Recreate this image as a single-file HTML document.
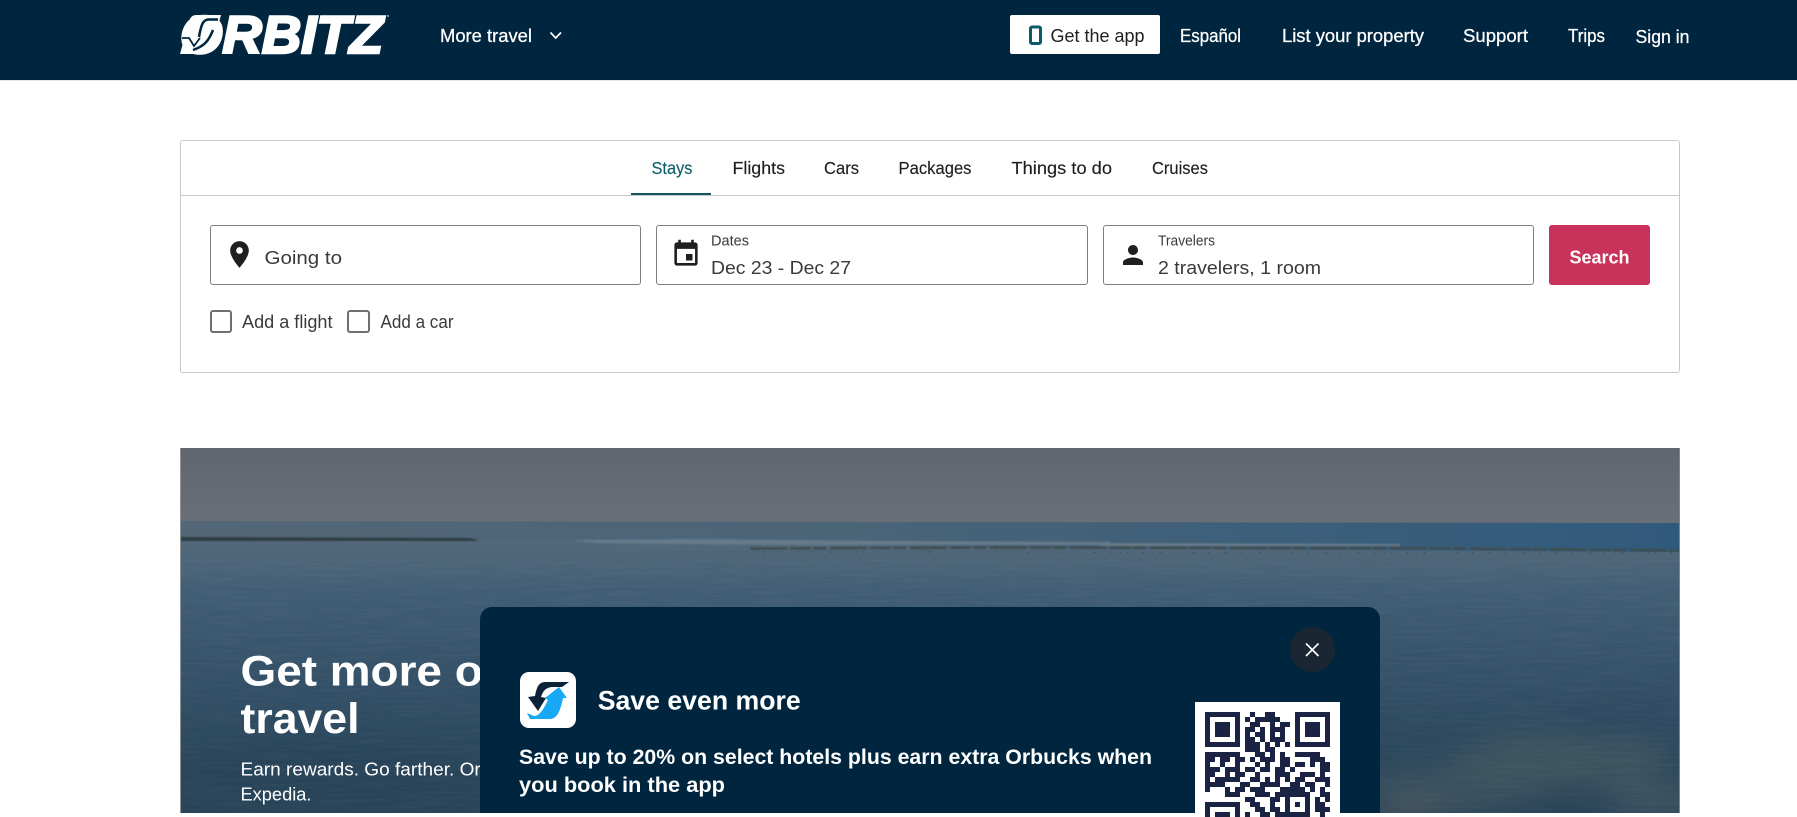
<!DOCTYPE html>
<html lang="en">
<head>
<meta charset="utf-8">
<title>Orbitz</title>
<style>
html,body{margin:0;padding:0;background:#fff;width:1797px;height:813px;overflow:hidden;font-family:"Liberation Sans",sans-serif}
.a{position:absolute;box-sizing:border-box}
svg{position:absolute;overflow:hidden}
svg text{font-family:"Liberation Sans",sans-serif}
</style>
</head>
<body>
<div class="a" style="left:0;top:0;width:1797px;height:80px;background:#00263f"></div>
<div class="a" style="left:0;top:80px;width:1797px;height:1px;background:#e4e6e8"></div>
<div class="a" style="left:1010px;top:15px;width:150px;height:39px;background:#fff;border-radius:2px"></div>

<div class="a" style="left:180px;top:140px;width:1500px;height:233px;border:1px solid #c8c8c8;border-radius:3px"></div>
<div class="a" style="left:180px;top:195px;width:1500px;height:1px;background:#c8c8c8"></div>
<div class="a" style="left:631px;top:193px;width:80px;height:2px;background:#14565f"></div>
<div class="a" style="left:210px;top:225px;width:431px;height:60px;border:1px solid #7f7f7f;border-radius:3px"></div>
<div class="a" style="left:656px;top:225px;width:432px;height:60px;border:1px solid #7f7f7f;border-radius:3px"></div>
<div class="a" style="left:1103px;top:225px;width:431px;height:60px;border:1px solid #7f7f7f;border-radius:3px"></div>
<div class="a" style="left:1549px;top:225px;width:101px;height:60px;background:#c8325b;border-radius:3px"></div>
<div class="a" style="left:210px;top:310px;width:22px;height:23px;border:2px solid #6f6f6f;border-radius:3px"></div>
<div class="a" style="left:347px;top:310px;width:23px;height:23px;border:2px solid #6f6f6f;border-radius:3px"></div>

<!-- hero -->
<svg style="left:180px;top:448px" width="1500" height="365" viewBox="180 448 1500 365">
<defs>
<linearGradient id="sky" x1="0" y1="0" x2="0" y2="1"><stop offset="0" stop-color="#60666d"/><stop offset="1" stop-color="#6a7078"/></linearGradient>
<linearGradient id="band" x1="0" y1="0" x2="1" y2="0"><stop offset="0" stop-color="#536777"/><stop offset=".45" stop-color="#4a6478"/><stop offset="1" stop-color="#305a7c"/></linearGradient>
<linearGradient id="sea" x1="0" y1="0" x2="0" y2="1"><stop offset="0" stop-color="#546a7b"/><stop offset=".18" stop-color="#425e75"/><stop offset=".45" stop-color="#37536a"/><stop offset=".75" stop-color="#2d495e"/><stop offset="1" stop-color="#2a4458"/></linearGradient>
<filter id="b" x="-30%" y="-60%" width="160%" height="220%"><feGaussianBlur stdDeviation="14"/></filter>
<filter id="b2" x="-5%" y="-200%" width="110%" height="500%"><feGaussianBlur stdDeviation=".8"/></filter>
<filter id="n" x="0" y="0" width="100%" height="100%"><feTurbulence type="fractalNoise" baseFrequency="0.02 0.35" numOctaves="3" seed="5"/><feColorMatrix values="0 0 0 0 .7  0 0 0 0 .78  0 0 0 0 .88  0 0 0 .5 -.18"/></filter>
</defs>
<rect x="180" y="448" width="1500" height="80" fill="url(#sky)"/>
<rect x="180" y="540" width="1500" height="273" fill="url(#sea)"/>
<polygon points="180,521 1680,523 1680,552 1000,548 600,541 180,540" fill="url(#band)"/>
<g filter="url(#b2)">
<polygon points="180,537 470,538 480,541 180,541" fill="#2f3d44"/>
<polygon points="570,540 690,539 900,541 1110,542 1110,545 800,545 600,543" fill="#667a8a"/>
<polygon points="1100,543 1400,544 1400,546 1100,546" fill="#687a88"/>
<path d="M750 548.500 L1000 547.500 L1400 548 L1680 550.500" fill="none" stroke="#3f4d4f" stroke-width="2.500" stroke-dasharray="37 3 21 2 13 4"/>
</g>
<path d="M680 552 L1000 552 L1300 553 L1680 553" fill="none" stroke="#46565f" stroke-width="1.200" stroke-dasharray="2 9 1 5 3 13"/>
<g filter="url(#b)" opacity=".6">
<ellipse cx="1560" cy="760" rx="110" ry="28" fill="#485e64"/>
<ellipse cx="1450" cy="790" rx="80" ry="20" fill="#465c63"/>
<ellipse cx="1620" cy="725" rx="90" ry="14" fill="#2a4560"/>
<ellipse cx="1420" cy="745" rx="70" ry="10" fill="#2b465c"/>
<ellipse cx="1660" cy="800" rx="50" ry="14" fill="#52636a"/>
<ellipse cx="1410" cy="812" rx="40" ry="10" fill="#5a5c62"/>
<ellipse cx="330" cy="770" rx="150" ry="26" fill="#284358"/>
</g>
<rect x="180" y="560" width="1500" height="253" filter="url(#n)" opacity=".15"/>
<rect x="180" y="448" width="1" height="365" fill="#8d9296"/>
<rect x="1679" y="448" width="1" height="365" fill="#7f878e"/>
<g fill="#fff">
<text transform="translate(240.500 685.500) scale(1.08 1)" font-size="42.500" font-weight="700">Get more out</text>
<text x="240.500" y="733" font-size="42.500" font-weight="700" textLength="119" lengthAdjust="spacingAndGlyphs">travel</text>
<text transform="translate(240.500 775.500) scale(1.03 1)" font-size="18.500">Earn rewards. Go farther. Or</text>
<text x="240.500" y="800.500" font-size="18.500" textLength="71" lengthAdjust="spacingAndGlyphs">Expedia.</text>
</g>
</svg>

<!-- dialog -->
<div class="a" style="left:480px;top:607px;width:900px;height:206px;background:#00263f;border-radius:12px 12px 0 0"></div>
<div class="a" style="left:1290px;top:627px;width:45px;height:45px;background:#1a2733;border-radius:50%"></div>
<div class="a" style="left:1195px;top:702px;width:145px;height:111px;background:#fff"></div>
<div class="a" style="left:520px;top:672px;width:56px;height:56px;background:#fff;border-radius:9px"></div>

<!-- all foreground text and icons -->
<svg style="left:0;top:0" width="1797" height="813" viewBox="0 0 1797 813">
<!-- logo -->
<text x="180" y="53" font-size="53" font-weight="700" font-style="italic" fill="#fff" stroke="#fff" stroke-width="2.600" stroke-linejoin="miter" textLength="203" lengthAdjust="spacingAndGlyphs">ORBITZ</text>
<path d="M196 15 H221 L212 48 Q210 54 204 54 H180 L189 21 Q191 15 196 15 Z" fill="#fff"/>
<path d="M218 19.500 H208 C203 20 201 25 199 37" fill="none" stroke="#00263f" stroke-width="2.500"/>
<path d="M213 30 C209 40 205 46 193 50" fill="none" stroke="#00263f" stroke-width="2.500"/>
<path d="M182 38 L189 38 L194 46 L200 38" fill="none" stroke="#00263f" stroke-width="1.800"/>
<circle cx="388" cy="16" r="1" fill="#9fb0bb"/>
<path d="M550.500 32.500 L555.700 38 L561 32.500" fill="none" stroke="#fff" stroke-width="1.700"/>

<g fill="#fff" stroke="#fff" stroke-width=".25" font-size="18">
<text x="440" y="42" textLength="92" lengthAdjust="spacingAndGlyphs">More travel</text>
<text x="1180" y="42" textLength="61" lengthAdjust="spacingAndGlyphs">Español</text>
<text x="1282" y="42" textLength="142" lengthAdjust="spacingAndGlyphs">List your property</text>
<text x="1463" y="42" textLength="65" lengthAdjust="spacingAndGlyphs">Support</text>
<text x="1568" y="42" textLength="37" lengthAdjust="spacingAndGlyphs">Trips</text>
<text x="1635.500" y="43" textLength="54" lengthAdjust="spacingAndGlyphs">Sign in</text>
</g>
<rect x="1030.500" y="27" width="10" height="16.500" rx="1.500" fill="none" stroke="#0b5a68" stroke-width="3"/>
<text x="1050.500" y="42" font-size="18" fill="#1f1f1f" textLength="94" lengthAdjust="spacingAndGlyphs">Get the app</text>

<g font-size="17.500" fill="#1f1f1f" stroke="#1f1f1f" stroke-width=".15">
<text x="651.500" y="174" fill="#0f5f6b" stroke="#0f5f6b" textLength="41" lengthAdjust="spacingAndGlyphs">Stays</text>
<text x="732.500" y="174" textLength="52.500" lengthAdjust="spacingAndGlyphs">Flights</text>
<text x="824" y="174" textLength="35" lengthAdjust="spacingAndGlyphs">Cars</text>
<text x="898.500" y="174" textLength="73" lengthAdjust="spacingAndGlyphs">Packages</text>
<text x="1011.500" y="174" textLength="100.500" lengthAdjust="spacingAndGlyphs">Things to do</text>
<text x="1152" y="174" textLength="56" lengthAdjust="spacingAndGlyphs">Cruises</text>
</g>

<path transform="translate(223.500 238.500) scale(1.333)" fill="#1f1f1f" d="M12 2C8.130 2 5 5.130 5 9c0 5.250 7 13 7 13s7-7.750 7-13c0-3.870-3.130-7-7-7zm0 9.500a2.500 2.500 0 0 1 0-5 2.500 2.500 0 0 1 0 5z"/>
<path transform="translate(670.500 238.500) scale(1.292)" fill="#1f1f1f" d="M17 12h-5v5h5v-5zM16 1v2H8V1H6v2H5c-1.110 0-1.990.9-1.990 2L3 19a2 2 0 0 0 2 2h14a2 2 0 0 0 2-2V5a2 2 0 0 0-2-2h-1V1h-2zm3 18H5V8h14v11z"/>
<path transform="translate(1118 240) scale(1.250)" fill="#1f1f1f" d="M12 12c2.210 0 4-1.790 4-4s-1.790-4-4-4-4 1.790-4 4 1.790 4 4 4zm0 2c-2.670 0-8 1.340-8 4v2h16v-2c0-2.660-5.330-4-8-4z"/>

<g fill="#3a3a3a">
<text x="264.500" y="264" font-size="18.500" textLength="77.500" lengthAdjust="spacingAndGlyphs">Going to</text>
<text x="711" y="245.500" font-size="14.500" textLength="38" lengthAdjust="spacingAndGlyphs">Dates</text>
<text x="711" y="274" font-size="18.500" textLength="140" lengthAdjust="spacingAndGlyphs">Dec 23 - Dec 27</text>
<text x="1158" y="245.500" font-size="14.500" textLength="57" lengthAdjust="spacingAndGlyphs">Travelers</text>
<text x="1158" y="274" font-size="18.500" textLength="163" lengthAdjust="spacingAndGlyphs">2 travelers, 1 room</text>
<text x="242" y="328" font-size="18" textLength="90.500" lengthAdjust="spacingAndGlyphs">Add a flight</text>
<text x="380.500" y="328" font-size="18" textLength="73" lengthAdjust="spacingAndGlyphs">Add a car</text>
</g>
<text x="1569.500" y="263.500" font-size="18.500" font-weight="700" fill="#fff" textLength="60" lengthAdjust="spacingAndGlyphs">Search</text>

<!-- close -->
<path d="M1306 643.500 L1318.500 656 M1318.500 643.500 L1306 656" stroke="#fff" stroke-width="1.600" fill="none"/>

<!-- app icon -->
<g transform="translate(520 672)">
<path fill="#0d2236" d="M49 10H26C19 10 17 14 15 24L8 25L18 39L26 26L21 25C23 18 27 15 33 15L42 15Z"/>
<path fill="#18a9f5" d="M7 41L14 44C20 44 24 36 28 28L25 26L39 15L47 26L43 26C41 36 38 47 30 47H10Z"/>
</g>

<text x="597.700" y="709.500" font-size="27" font-weight="700" fill="#fff" textLength="203" lengthAdjust="spacingAndGlyphs">Save even more</text>
<g fill="#fff" font-size="21" font-weight="700">
<text x="519" y="764" textLength="633" lengthAdjust="spacingAndGlyphs">Save up to 20% on select hotels plus earn extra Orbucks when</text>
<text x="519" y="792" textLength="206" lengthAdjust="spacingAndGlyphs">you book in the app</text>
</g>
</svg>

<!-- QR -->
<svg style="left:1205px;top:712px" width="125" height="105" viewBox="0 0 25 21" shape-rendering="crispEdges">
<g fill="none" stroke="#1a2344" stroke-width="1">
<rect x=".5" y=".5" width="6" height="6"/>
<rect x="18.500" y=".5" width="6" height="6"/>
<rect x=".5" y="18.500" width="6" height="6"/>
</g>
<g fill="#1a2344">
<rect x="2" y="2" width="3" height="3"/>
<rect x="20" y="2" width="3" height="3"/>
<rect x="2" y="20" width="3" height="3"/>
</g>
<path fill="none" stroke="#1a2344" stroke-width="1" d="
M9 .5h1M12 .5h2
M8 1.500h1M10 1.500h5
M9 2.500h2M13 2.500h1M15 2.500h2
M8 3.500h2M11 3.500h1M13 3.500h3
M8 4.500h1M10 4.500h2M13 4.500h1M15 4.500h1
M8 5.500h2M11 5.500h1M13 5.500h3
M8 6.500h3M12 6.500h1M14 6.500h1M16 6.500h1
M8 7.500h3M12 7.500h2
M0 8.500h7M10 8.500h2M13 8.500h1M15 8.500h1M18 8.500h5
M0 9.500h2M3 9.500h2M6 9.500h2M9 9.500h1M11 9.500h3M15 9.500h2M21 9.500h3
M0 10.500h1M3 10.500h1M6 10.500h1M10 10.500h1M12 10.500h1M15 10.500h2M18 10.500h2M21 10.500h1M23 10.500h2
M0 11.500h3M4 11.500h3M8 11.500h2M11 11.500h2M14 11.500h2M17 11.500h1M23 11.500h2
M0 12.500h2M4 12.500h1M6 12.500h2M10 12.500h1M14 12.500h3M19 12.500h3M23 12.500h1
M0 13.500h1M2 13.500h5M9 13.500h2M12 13.500h1M14 13.500h1M16 13.500h1M18 13.500h2M22 13.500h3
M0 14.500h4M7 14.500h2M11 14.500h4M17 14.500h2M20 14.500h2M24 14.500h1
M0 15.500h1M4 15.500h1M6 15.500h2M9 15.500h3M15 15.500h3M18 15.500h2M21 15.500h1M23 15.500h1
M4 16.500h3M10 16.500h3M14 16.500h2M16 16.500h5M23 16.500h2
M8 17.500h2M13 17.500h2M16 17.500h1M20 17.500h1M22 17.500h1M24 17.500h1
M9 18.500h2M13 18.500h1M16 18.500h1M18 18.500h1M20 18.500h1M22 18.500h2
M10 19.500h2M13 19.500h2M16 19.500h1M20 19.500h1M22 19.500h3
M8 20.500h1M11 20.500h2M14 20.500h2M16 20.500h5M23 20.500h1"/>
</svg>
</body>
</html>
